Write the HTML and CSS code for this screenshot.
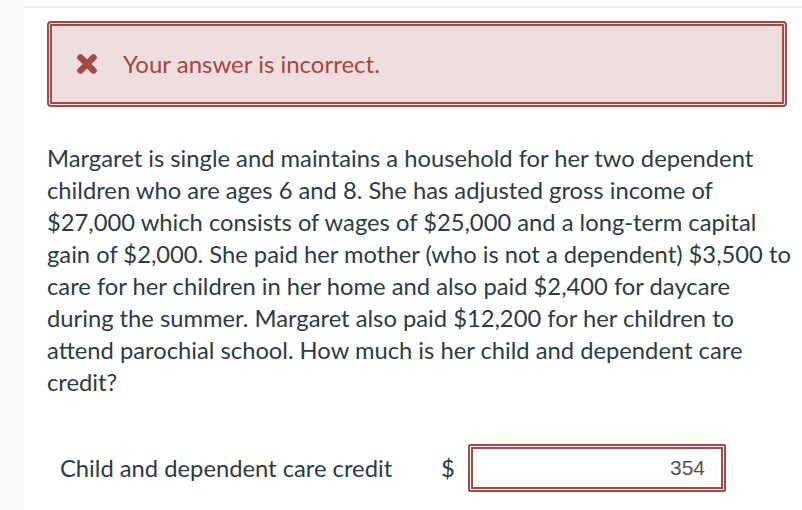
FILE: index.html
```html
<!DOCTYPE html>
<html lang="en">
<head>
<meta charset="utf-8">
<link rel="stylesheet" href="styles.css">
</head>
<body>
<div class="page">
  <aside class="rail"></aside>
  <main class="main">
    <div class="alert">
      <svg class="alert-icon" width="22" height="22" viewBox="0 0 22 22" aria-hidden="true">
        <path d="M4.5 4.5 L17.5 17.5 M17.5 4.5 L4.5 17.5" stroke="#a54a47" stroke-width="6.5" stroke-linecap="round" fill="none"/>
      </svg>
      <span class="alert-text">Your answer is incorrect.</span>
    </div>
    <p class="question">Margaret is single and maintains a household for her two dependent children who are ages 6 and 8. She has adjusted gross income of $27,000 which consists of wages of $25,000 and a long-term capital gain of $2,000. She paid her mother (who is not a dependent) $3,500 to care for her children in her home and also paid $2,400 for daycare during the summer. Margaret also paid $12,200 for her children to attend parochial school. How much is her child and dependent care credit?</p>
    <div class="answer-row">
      <span class="answer-label">Child and dependent care credit</span>
      <span class="currency">$</span>
      <div class="answer-input">354</div>
    </div>
  </main>
</div>
</body>
</html>
```
FILE: styles.css
```css
html, body {
  margin: 0;
  padding: 0;
  background: #ffffff;
}
body {
  font-family: Lato, "Noto Sans", sans-serif;
  color: #2d3b45;
}
.page {
  display: flex;
  width: 802px;
  height: 510px;
  overflow: hidden;
}
.rail {
  width: 24px;
  flex: 0 0 24px;
  background: #fafafa;
}
.main {
  flex: 1;
  margin-top: 6px;
  border-top: 2px solid #ededed;
  padding: 13px 0 0 23px;
}
.alert {
  box-sizing: border-box;
  width: 740px;
  height: 86px;
  border: 5px double #a54a47;
  border-radius: 4px;
  background: #efdede;
  display: flex;
  align-items: center;
  padding-left: 24px;
  padding-bottom: 2px;
}
.alert-icon {
  flex: 0 0 auto;
  margin-top: 1px;
}
.alert-text {
  margin-left: 25px;
  font-size: 24px;
  color: #a94442;
}
.question {
  margin: 35px 0 0 0;
  width: 750px;
  font-size: 23.75px;
  line-height: 32px;
  color: #2d3b45;
}
.answer-row {
  display: flex;
  align-items: center;
  margin-top: 46px;
  padding-left: 13px;
}
.answer-label {
  width: 381px;
  font-size: 23.75px;
}
.currency {
  width: 27px;
  font-size: 23.75px;
}
.answer-input {
  box-sizing: border-box;
  width: 258px;
  height: 48px;
  border: 5px double #a54a47;
  border-radius: 2px;
  background: #fff;
  display: flex;
  align-items: center;
  justify-content: flex-end;
  padding-right: 16px;
  font-family: "Liberation Sans", Arial, sans-serif;
  font-size: 21px;
  color: #555;
}
```
